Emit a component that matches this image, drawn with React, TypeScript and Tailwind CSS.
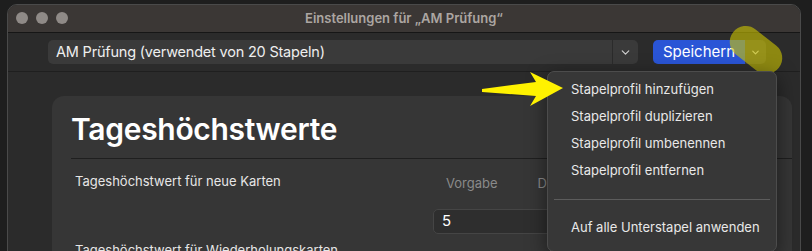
import { ChevronDown } from "lucide-react";

const menuItems = [
  "Stapelprofil hinzufügen",
  "Stapelprofil duplizieren",
  "Stapelprofil umbenennen",
  "Stapelprofil entfernen",
];

export default function App() {
  return (
    <div
      className="relative h-[251px] w-[812px] overflow-hidden bg-[#1e1e1e] pl-[7px] pr-[11px] pt-[4px] text-[13px] text-[#e6e6e6]"
      style={{ fontFamily: "Inter, 'Noto Sans', sans-serif" }}
    >
      {/* window */}
      <div className="flex h-[260px] flex-col overflow-hidden rounded-t-[10px] border border-[#4a4a4a] bg-[#2b2b2b]">
        {/* title bar */}
        <div className="relative flex h-[28px] shrink-0 items-center justify-center border-b border-[#161616] bg-[#3b3735]">
          <div className="absolute left-[8px] top-[7px] flex gap-[8px]">
            <span className="h-[12px] w-[12px] rounded-full bg-[#8f8a87]" />
            <span className="h-[12px] w-[12px] rounded-full bg-[#8f8a87]" />
            <span className="h-[12px] w-[12px] rounded-full bg-[#8f8a87]" />
          </div>
          <span className="text-[13px] font-semibold text-[#aca6a2]">Einstellungen für „AM Prüfung“</span>
        </div>

        {/* toolbar */}
        <div className="flex h-[39px] shrink-0 items-center border-b border-[#1f1f1f] pl-[40px] pr-[33px]">
          <div className="flex h-[24px] w-[590px] items-center rounded-[5px] bg-[#3a3a3a]">
            <span className="flex-1 pl-[8px] text-[14.5px] tracking-[-0.2px] text-[#eeeeee]">AM Prüfung (verwendet von 20 Stapeln)</span>
            <span className="flex h-full w-[26px] items-center justify-center border-l border-[#2b2b2b]">
              <ChevronDown size={13} strokeWidth={2.2} className="text-[#d0d0d0]" />
            </span>
          </div>
          <div className="ml-[15px] flex h-[24px]">
            <span className="flex w-[92px] items-center justify-center rounded-l-[5px] bg-[#2a55d6] text-[15px] text-white">
              Speichern
            </span>
            <span className="flex w-[21px] items-center justify-center rounded-r-[5px] bg-[#414141]">
              <ChevronDown size={11} strokeWidth={2.4} className="text-[#d8d8d8]" />
            </span>
          </div>
        </div>

        {/* content */}
        <div className="flex-1 pl-[44px] pr-[8px] pt-[24px]">
          <div className="h-full rounded-[12px] bg-[#363636] pl-[19px] pt-[14px]">
            <h1 className="pb-[10px] text-[30px] font-semibold leading-[38px] tracking-[-0.3px] text-white">Tageshöchstwerte</h1>
            <div className="border-t border-[#1f1f1f]" />
            <div className="flex items-start pl-[4px] pt-[13px]">
              <span className="w-[371px]">Tageshöchstwert für neue Karten</span>
              <span className="pt-[2px] text-[#8a8a8a]">Vorgabe</span>
              <span className="ml-[40px] pt-[2px] text-[#8a8a8a]">Diesem Stapel</span>
            </div>
            <div className="ml-[362px] mt-[15px] flex h-[25px] w-[160px] items-center rounded-[5px] border border-[#454545] bg-[#2e2e2e] pl-[8px] text-[15px] text-white">
              5
            </div>
            <div className="pl-[4px] pt-[7px]">Tageshöchstwert für Wiederholungskarten</div>
          </div>
        </div>
      </div>

      {/* highlight marker */}
      <div className="absolute left-[727px] top-[34px] h-[32px] w-[58px] rotate-[38deg] rounded-full bg-[#cfc600]/60" />

      {/* dropdown menu */}
      <div className="absolute left-[547px] top-[71px] flex w-[230px] flex-col rounded-[7px] border border-[#4c4c4c] bg-[#373737] pb-[10px] pt-[4px] shadow-[0_6px_20px_rgba(0,0,0,0.5)]">
        {menuItems.map((item) => (
          <div key={item} className="flex h-[27px] items-center pl-[23px] text-[#e8e8e8]">
            {item}
          </div>
        ))}
        <div className="mx-[6px] mb-[14px] mt-[15px] border-t border-[#5c5c5c]" />
        <div className="flex h-[27px] items-center pl-[23px] text-[#e8e8e8]">Auf alle Unterstapel anwenden</div>
      </div>

      {/* arrow */}
      <svg className="absolute left-0 top-0" width="812" height="251" viewBox="0 0 812 251">
        <polygon points="482,89 536,82 530,72 563,88 530,106 536,96 482,92" fill="#fff200" />
      </svg>
    </div>
  );
}
